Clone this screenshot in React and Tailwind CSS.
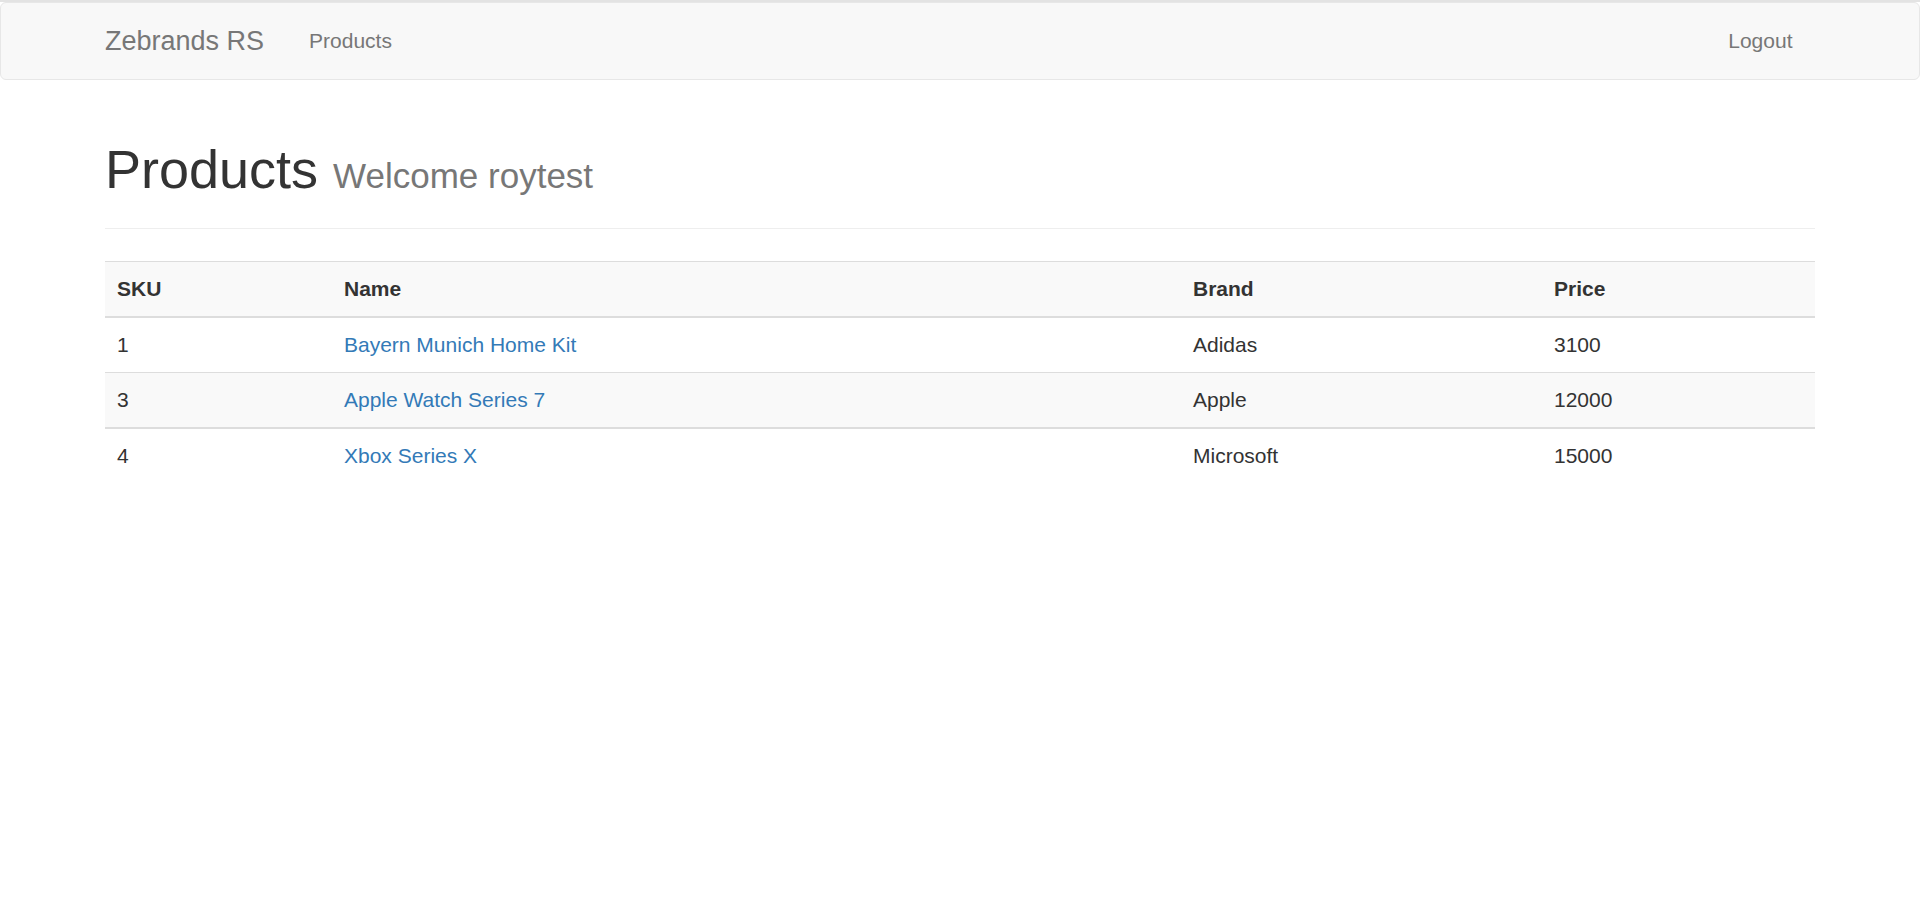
const products = [
  { sku: 1, name: 'Bayern Munich Home Kit', brand: 'Adidas', price: 3100 },
  { sku: 3, name: 'Apple Watch Series 7', brand: 'Apple', price: 12000 },
  { sku: 4, name: 'Xbox Series X', brand: 'Microsoft', price: 15000 },
]

export default function App() {
  return (
    <div className="min-h-screen bg-white font-['Liberation_Sans',Arial,sans-serif] text-[21px] leading-[30px] text-[#333]">
      <div className="h-[2px] bg-[#e3e3e3]" />
      <nav className="h-[78px] rounded-[6px] border border-[#e7e7e7] bg-[#f8f8f8]">
        <div className="mx-auto flex h-full w-[1755px] items-center px-[22.5px]">
          <a className="-ml-[22.5px] px-[22.5px] text-[27px] text-[#777]">Zebrands RS</a>
          <a className="px-[22.5px] text-[#777]">Products</a>
          <a className="ml-auto px-[22.5px] text-[#777]">Logout</a>
        </div>
      </nav>

      <div className="mx-auto w-[1755px] px-[22.5px]">
        <div className="mt-[60px] mb-[32px] border-b border-[#eee] pb-[13.5px]">
          <h1 className="mb-[15px] text-[54px] font-normal leading-[1.1] text-[#333]">
            Products <small className="text-[35px] text-[#777]">Welcome roytest</small>
          </h1>
        </div>

        <table className="w-full table-fixed border-collapse">
          <colgroup>
            <col className="w-[227px]" />
            <col className="w-[849px]" />
            <col className="w-[361px]" />
            <col className="w-[273px]" />
          </colgroup>
          <thead>
            <tr className="border-t border-b-2 border-[#ddd] bg-[#f9f9f9] text-left">
              <th className="px-3 py-3 font-bold">SKU</th>
              <th className="px-3 py-3 font-bold">Name</th>
              <th className="px-3 py-3 font-bold">Brand</th>
              <th className="px-3 py-3 font-bold">Price</th>
            </tr>
          </thead>
          <tbody>
            {products.map((product, index) => (
              <tr
                key={product.sku}
                className={
                  index === 0
                    ? 'border-b border-[#ddd]'
                    : index === 1
                      ? 'border-b-2 border-[#ddd] bg-[#f9f9f9]'
                      : ''
                }
              >
                <td className="px-3 py-3">{product.sku}</td>
                <td className="px-3 py-3">
                  <a className="text-[#337ab7]">{product.name}</a>
                </td>
                <td className="px-3 py-3">{product.brand}</td>
                <td className="px-3 py-3">{product.price}</td>
              </tr>
            ))}
          </tbody>
        </table>
      </div>
    </div>
  )
}
